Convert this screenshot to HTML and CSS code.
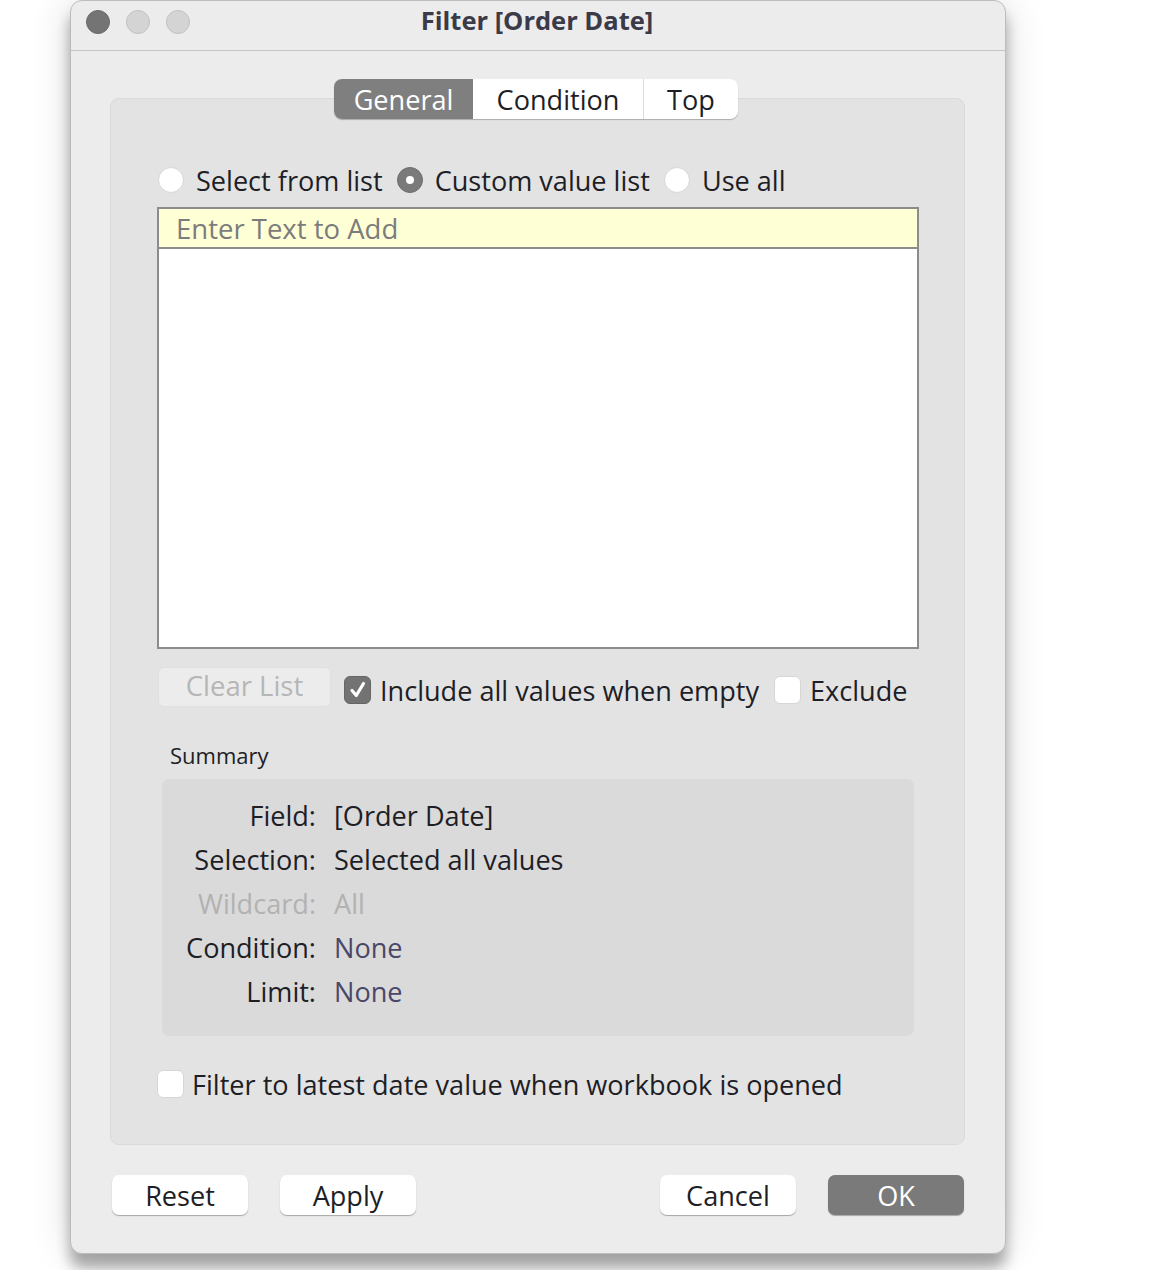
FILE: index.html
```html
<!DOCTYPE html>
<html>
<head>
<meta charset="utf-8">
<link rel="stylesheet" href="styles.css">
</head>
<body>
<div class="window">
  <div class="titlebar">
    <div class="lights">
      <span class="light dark"></span>
      <span class="light"></span>
      <span class="light"></span>
    </div>
    <div class="title">Filter [Order Date]</div>
    <div></div>
  </div>
  <div class="content">
    <div class="panel">
      <div class="tabs">
        <div class="tab active">General</div>
        <div class="tab t-cond">Condition</div>
        <div class="tab t-top">Top</div>
      </div>
      <div class="radios">
        <label class="opt"><span class="radio"></span>Select from list</label>
        <label class="opt"><span class="radio on"></span>Custom value list</label>
        <label class="opt"><span class="radio"></span>Use all</label>
      </div>
      <div class="listbox">
        <div class="entry">Enter Text to Add</div>
        <div class="list"></div>
      </div>
      <div class="controls">
        <div class="btn-clear">Clear List</div>
        <label class="opt chk-incl"><span class="check on"><svg width="20" height="20" viewBox="0 0 20 20"><path d="M4 10.5 L8.3 15.5 L15.5 3.5" fill="none" stroke="#fff" stroke-width="3.2" stroke-linecap="round" stroke-linejoin="round"/></svg></span>Include all values when empty</label>
        <label class="opt chk-excl"><span class="check"></span>Exclude</label>
      </div>
      <div class="summary-label">Summary</div>
      <div class="summary">
        <div class="row"><span class="k">Field:</span><span class="v">[Order Date]</span></div>
        <div class="row"><span class="k">Selection:</span><span class="v">Selected all values</span></div>
        <div class="row dim"><span class="k">Wildcard:</span><span class="v">All</span></div>
        <div class="row"><span class="k">Condition:</span><span class="v blue">None</span></div>
        <div class="row"><span class="k">Limit:</span><span class="v blue">None</span></div>
      </div>
      <label class="opt latest"><span class="check"></span>Filter to latest date value when workbook is opened</label>
    </div>
    <div class="buttons">
      <div class="group">
        <div class="btn">Reset</div>
        <div class="btn">Apply</div>
      </div>
      <div class="group">
        <div class="btn">Cancel</div>
        <div class="btn primary">OK</div>
      </div>
    </div>
  </div>
</div>
</body>
</html>
```
FILE: styles.css
```css
html, body {
  margin: 0;
  padding: 0;
  background: #ffffff;
}
body {
  padding-left: 70px;
  font-family: "Open Sans", "DejaVu Sans", sans-serif;
  color: #1e1e26;
  height: 1270px;
  overflow: hidden;
}
.window {
  width: 936px;
  height: 1254px;
  box-sizing: border-box;
  background: #ececec;
  border-radius: 12px;
  border: 1px solid #bcbcbc;
  box-shadow: 0 14px 14px rgba(0,0,0,0.32), 0 0 40px rgba(0,0,0,0.14);
  display: flex;
  flex-direction: column;
}
.titlebar {
  height: 50px;
  box-sizing: border-box;
  border-bottom: 1px solid #c4c4c4;
  display: grid;
  grid-template-columns: 1fr auto 1fr;
  align-items: center;
}
.lights {
  display: flex;
  gap: 16px;
  padding-left: 15px;
  margin-top: -7px;
}
.light {
  width: 22px;
  height: 22px;
  border-radius: 50%;
  background: #d4d4d4;
  border: 1px solid #c2c2c2;
}
.light.dark {
  background: #747474;
  border-color: #6a6a6a;
}
.title {
  font-weight: bold;
  font-size: 25.5px;
  color: #3a3a48;
  margin-top: -11px;
  margin-left: -2px;
}
.content {
  padding: 0 40px 0 39px;
  flex: 1;
  display: flex;
  flex-direction: column;
}
.panel {
  margin-top: 47px;
  height: 1047px;
  box-sizing: border-box;
  background: #e3e3e3;
  border: 1px solid #dadada;
  border-radius: 9px;
  padding: 0 45px 0 46px;
  display: flex;
  flex-direction: column;
}
.tabs {
  align-self: center;
  margin-top: -20px;
  margin-left: -4px;
  height: 40px;
  display: flex;
  background: #fff;
  border-radius: 8px;
  box-shadow: 0 1px 1px rgba(0,0,0,0.25);
  overflow: hidden;
  font-size: 27.1px;
}
.tab {
  display: flex;
  align-items: center;
  justify-content: center;
  color: #1e1e26;
}
.tab.active {
  width: 139px;
  background: #7f7f7f;
  color: #fff;
}
.t-cond {
  width: 170px;
  border-right: 1px solid #dcdcdc;
}
.t-top { width: 94px; }
.opt {
  display: flex;
  align-items: center;
  font-size: 27.1px;
  white-space: nowrap;
}
.radios {
  margin-top: 47px;
  height: 28px;
  display: flex;
  gap: 14px;
  margin-left: 1px;
}
.radio {
  width: 26px;
  height: 26px;
  box-sizing: border-box;
  border-radius: 50%;
  background: #fff;
  border: 1px solid #d6d6d6;
  margin-right: 12px;
  position: relative;
}
.radio.on {
  background: #7a7a7a;
  border-color: #6e6e6e;
}
.radio.on::after {
  content: "";
  position: absolute;
  left: 8px;
  top: 8px;
  width: 8px;
  height: 8px;
  border-radius: 50%;
  background: #fff;
}
.listbox {
  margin-top: 13px;
  height: 442px;
  box-sizing: border-box;
  border: 2px solid #8c8c8c;
  display: flex;
  flex-direction: column;
}
.entry {
  height: 40px;
  box-sizing: border-box;
  border-bottom: 2px solid #8c8c8c;
  background: #ffffd6;
  color: #7c7c7c;
  font-size: 27.5px;
  display: flex;
  align-items: center;
  padding-left: 17px;
}
.list {
  flex: 1;
  background: #fff;
}
.controls {
  margin-top: 21px;
  height: 40px;
  display: flex;
  align-items: center;
}
.btn-clear {
  align-self: flex-start;
  width: 173px;
  height: 40px;
  margin-left: 1px;
  box-sizing: border-box;
  border-radius: 6px;
  background: #ececec;
  border: 1px solid #e0e0e0;
  color: #b6b6b6;
  font-size: 27.5px;
  display: flex;
  align-items: center;
  justify-content: center;
  margin-right: 13px;
  margin-top: -3px;
  padding-bottom: 3px;
}
.check {
  width: 27px;
  height: 28px;
  box-sizing: border-box;
  border-radius: 6px;
  background: #fff;
  border: 1px solid #d6d6d6;
  margin-right: 9px;
  display: flex;
  align-items: center;
  justify-content: center;
}
.check.on {
  background: #737373;
  border-color: #666;
}
.chk-excl {
  margin-left: 15px;
}
.summary-label {
  margin-top: 31px;
  margin-left: 13px;
  font-size: 22px;
  line-height: 28px;
}
.summary {
  margin: 10px 5px 0 5px;
  height: 257px;
  box-sizing: border-box;
  background: #dadada;
  border-radius: 7px;
  padding-top: 19px;
  display: flex;
  flex-direction: column;
}
.row {
  display: grid;
  grid-template-columns: 154px 1fr;
  column-gap: 18px;
  height: 44px;
  font-size: 27.1px;
  line-height: 36px;
}
.row .k { text-align: right; }
.row.dim { color: #b2b2b2; }
.v.blue { color: #4a4868; }
.latest {
  margin-top: 33px;
  height: 30px;
}
.latest .check { margin-right: 8px; }
.buttons {
  margin-top: 30px;
  display: flex;
  justify-content: space-between;
  padding: 0 1px 0 2px;
}
.group {
  display: flex;
  gap: 32px;
}
.btn {
  width: 136px;
  height: 40px;
  box-sizing: border-box;
  border-radius: 7px;
  background: #fff;
  box-shadow: 0 1px 1px rgba(0,0,0,0.3);
  font-size: 27.1px;
  display: flex;
  align-items: center;
  justify-content: center;
}
.btn.primary {
  background: #7a7a7a;
  color: #fff;
}
```
